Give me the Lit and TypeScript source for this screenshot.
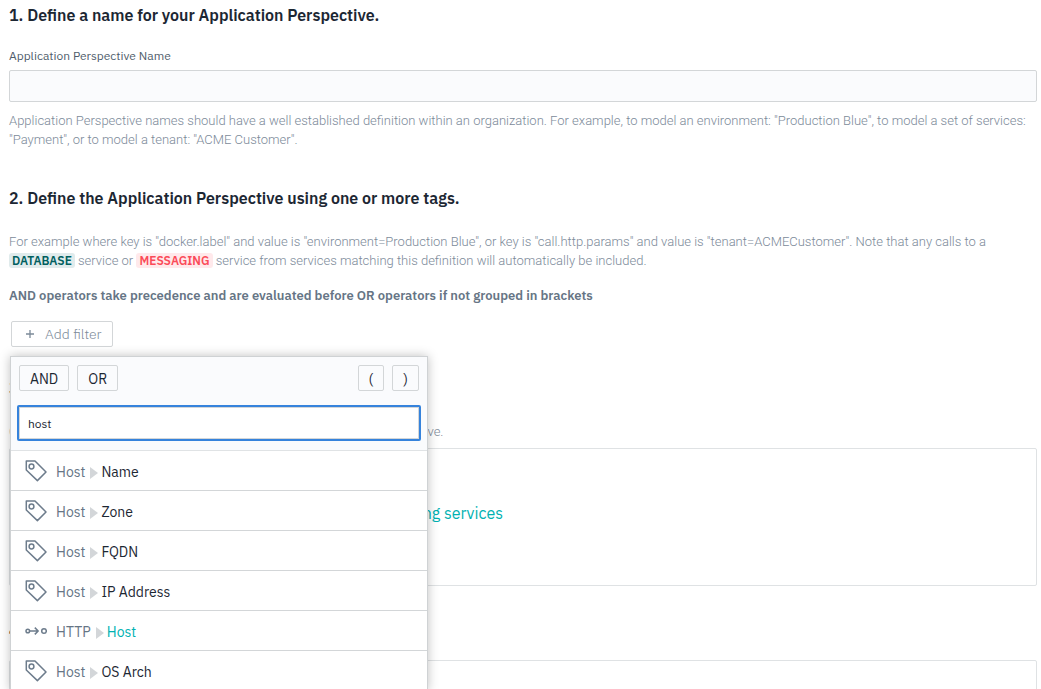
import { LitElement, html, css, svg } from "lit";
import { customElement, state } from "lit/decorators.js";
import { classMap } from "lit/directives/class-map.js";

interface TagEntry {
  group: string;
  name: string;
  kind: "tag" | "call";
}

const TAGS: TagEntry[] = [
  { group: "Host", name: "Name", kind: "tag" },
  { group: "Host", name: "Zone", kind: "tag" },
  { group: "Host", name: "FQDN", kind: "tag" },
  { group: "Host", name: "IP Address", kind: "tag" },
  { group: "HTTP", name: "Host", kind: "call" },
  { group: "Host", name: "OS Arch", kind: "tag" },
];

const tagIcon = svg`
  <path d="M1.300 1H10L21 12 12.400 20.600 1.300 10z" />
  <circle cx="6.500" cy="6.500" r="2.400" />`;

const callIcon = svg`
  <circle cx="2.800" cy="11" r="1.800" />
  <path d="M4.600 11H13M9.800 7.600l3.400 3.400-3.400 3.400" />
  <circle cx="19" cy="11" r="2.300" />`;

@customElement("filter-menu")
export class FilterMenu extends LitElement {
  static styles = css`
    :host {
      display: block;
      box-sizing: border-box;
      width: 418px;
      border: 1px solid #cfd2d4;
      background: #fff;
      box-shadow: 0 0 10px rgba(0, 0, 0, 0.25);
    }
    .head {
      display: flex;
      flex-direction: column;
      gap: 14px;
      padding: 8px 6px 9px;
      background: #fafbfd;
    }
    .operators {
      display: flex;
      gap: 8px;
      padding: 0 2px;
    }
    .operator {
      height: 26px;
      padding: 1px 10px 0;
      border: 1px solid #d3d6d8;
      border-radius: 2px;
      background: #fafbfd;
      color: #1c2733;
      font: 400 14px/24px "IBM Plex Sans", Roboto, sans-serif;
    }
    .push {
      margin-left: auto;
    }
    .search {
      box-sizing: border-box;
      width: 100%;
      height: 36px;
      padding: 1px 9px 0;
      border: 2px solid #3683dc;
      border-radius: 2px;
      box-shadow: inset 0 0 0 1px #d3d6d8;
      outline: none;
      background: #fff;
      color: #1c2733;
      font: 400 12px/20px "IBM Plex Sans", Roboto, sans-serif;
    }
    .list {
      margin: 0;
      padding: 0;
      list-style: none;
    }
    .item {
      border-top: 1px solid #d3d6d8;
    }
    .item:first-child {
      border-top-color: #e0e3e5;
    }
    .entry {
      display: flex;
      align-items: center;
      width: 100%;
      height: 39px;
      padding: 2px 14px 0;
      border: 0;
      background: none;
      color: #1c2733;
      font: 400 14px/20px "IBM Plex Sans", Roboto, sans-serif;
      text-align: left;
    }
    .icon {
      width: 22px;
      height: 22px;
      margin: 0 9px 2px 0;
      fill: none;
      stroke: #6d7c8c;
      stroke-width: 1.5;
      stroke-linejoin: round;
    }
    .group {
      color: #667585;
    }
    .arrow {
      width: 8px;
      height: 12px;
      margin: 2px 3px 0 5px;
      fill: #d3d6d9;
    }
    .match {
      color: #00b2b2;
    }
  `;

  @state() private query = "host";

  render() {
    return html`
      <div class="head">
        <div class="operators">
          <button class="operator" type="button">AND</button>
          <button class="operator" type="button">OR</button>
          <button class="operator push" type="button">(</button>
          <button class="operator" type="button">)</button>
        </div>
        <input
          class="search"
          type="text"
          aria-label="Search tags"
          .value=${this.query}
          @input=${(e: Event) => (this.query = (e.target as HTMLInputElement).value)}
        />
      </div>
      <ul class="list">
        ${TAGS.map(
          (t) => html`<li class="item">
            <button class="entry" type="button">
              <svg class="icon" viewBox="0 0 22 22" aria-hidden="true">
                ${t.kind === "tag" ? tagIcon : callIcon}
              </svg>
              <span class="group">${t.group}</span>
              <svg class="arrow" viewBox="0 0 8 12" aria-hidden="true"><path d="M0 0l8 6-8 6z" /></svg>
              <span class=${classMap({ match: t.name.toLowerCase() === this.query })}>${t.name}</span>
            </button>
          </li>`
        )}
      </ul>
    `;
  }
}

@customElement("app-root")
export class AppRoot extends LitElement {
  static styles = css`
    :host {
      display: block;
      box-sizing: border-box;
      height: 100vh;
      overflow: hidden;
      padding: 3px 4px 0 9px;
      background: #fff;
      color: #1c2733;
      font: 400 16px/24px "IBM Plex Sans", Roboto, sans-serif;
    }
    .title {
      margin: 0;
      font-size: 16px;
      font-weight: 600;
      line-height: 24px;
    }
    .step {
      margin-bottom: 32px;
    }
    .naming {
      margin-bottom: 37px;
    }
    .tagging {
      margin-bottom: 29px;
    }
    .label {
      display: block;
      margin: 19px 0 4px;
      color: #4f5d6b;
      font-size: 12px;
      line-height: 20px;
    }
    .name {
      display: block;
      box-sizing: border-box;
      width: 100%;
      height: 32px;
      padding: 0 10px;
      border: 1px solid #d3d6d8;
      border-radius: 2px;
      background: #fafbfd;
      color: #1c2733;
      font: 400 12px/20px "IBM Plex Sans", Roboto, sans-serif;
    }
    .note {
      margin: 9px 0 0;
      color: #7c8a99;
      font: 300 13px/19px Roboto, "IBM Plex Sans", sans-serif;
    }
    .title + .note {
      margin-top: 22px;
    }
    .badge {
      padding: 0 3px;
      border-radius: 3px;
      font: 600 12px/16px "IBM Plex Sans", Roboto, sans-serif;
    }
    .database {
      background: #e0ebec;
      color: #005f5f;
    }
    .messaging {
      background: #ffe9eb;
      color: #fb4b58;
    }
    .rule {
      margin: 16px 0;
      color: #667585;
      font-size: 13px;
      font-weight: 600;
      line-height: 19px;
    }
    .filter {
      position: relative;
      padding-left: 2px;
    }
    .add {
      display: flex;
      align-items: center;
      gap: 11px;
      height: 26px;
      padding: 0 10px 0 14px;
      border: 1px solid #d3d6d8;
      border-radius: 2px;
      background: #fff;
      color: #7c8a99;
      font: 300 14px/20px "IBM Plex Sans", Roboto, sans-serif;
    }
    .plus {
      width: 8px;
      height: 8px;
      stroke: #7c8a99;
      stroke-width: 1.3;
    }
    .menu {
      position: absolute;
      top: 35px;
      left: 1px;
      z-index: 1;
    }
    .panel {
      display: grid;
      grid-template-columns: 1fr 1fr;
      align-items: center;
      box-sizing: border-box;
      min-height: 138px;
      margin-top: 18px;
      padding-bottom: 8px;
      border: 1px solid #dfe2e4;
      border-radius: 2px;
    }
    .note + .panel {
      margin-top: 7px;
    }
    .link {
      justify-self: end;
      padding-right: 20px;
      color: #00b2b2;
      text-decoration: none;
    }
  `;

  render() {
    return html`
      <section class="step naming">
        <h2 class="title">1. Define a name for your Application Perspective.</h2>
        <label class="label" for="name">Application Perspective Name</label>
        <input class="name" id="name" type="text" />
        <p class="note">
          Application Perspective names should have a well established definition within an organization. For example,
          to model an environment: "Production Blue", to model a set of services: "Payment", or to model a tenant: "ACME
          Customer".
        </p>
      </section>
      <section class="step tagging">
        <h2 class="title">2. Define the Application Perspective using one or more tags.</h2>
        <p class="note">
          For example where key is "docker.label" and value is "environment=Production Blue", or key is
          "call.http.params" and value is "tenant=ACMECustomer". Note that any calls to a
          <span class="badge database">DATABASE</span> service or
          <span class="badge messaging">MESSAGING</span> service from services matching this definition will
          automatically be included.
        </p>
        <p class="rule">
          AND operators take precedence and are evaluated before OR operators if not grouped in brackets
        </p>
        <div class="filter">
          <button class="add" type="button">
            <svg class="plus" viewBox="0 0 8 8" aria-hidden="true"><path d="M4 0v8M0 4h8" /></svg>
            Add filter
          </button>
          <filter-menu class="menu"></filter-menu>
        </div>
      </section>
      <section class="step">
        <h2 class="title">3. Choose which services to include.</h2>
        <p class="note">Choose downstream services that will be part of the Application Perspective.</p>
        <div class="panel"><a class="link" href="#services">matching services</a></div>
      </section>
      <section class="step">
        <h2 class="title">4. Review.</h2>
        <div class="panel"></div>
      </section>
    `;
  }
}
